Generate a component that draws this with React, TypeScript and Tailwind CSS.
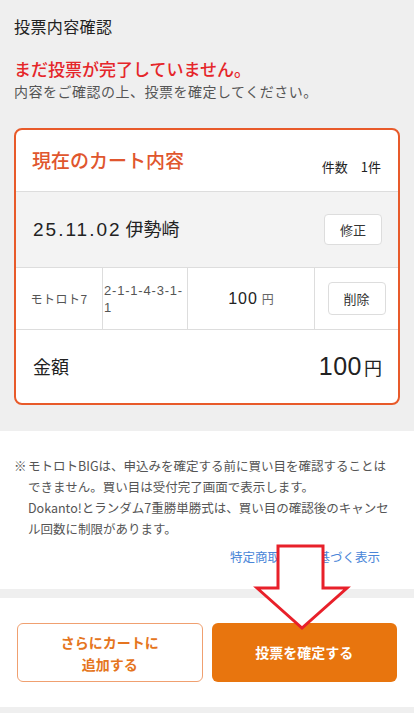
import React from "react";

const font = { fontFamily: '"Noto Sans CJK JP", "Noto Sans", sans-serif' };
const num = { fontFamily: '"Liberation Sans", Arial, sans-serif' };

export default function App() {
  return (
    <div className="relative min-h-[713px] w-[414px] bg-[#efefef] text-[#222]" style={font}>
      {/* Top */}
      <div className="px-[14px] pt-[14px]">
        <h1 className="text-[16px] leading-[24px] tracking-[0.4px] text-[#222]">投票内容確認</h1>
        <p className="mt-[20px] text-[17px] leading-[22px] font-medium text-[#e5262a]">まだ投票が完了していません。</p>
        <p className="text-[14px] leading-[22px] tracking-[0.5px] text-[#555]">内容をご確認の上、投票を確定してください。</p>
      </div>

      {/* Card */}
      <div className="mx-[14px] mt-[26px] overflow-hidden rounded-[8px] border-2 border-[#e85a2a] bg-white">
        <div className="flex h-[62px] items-center justify-between border-b border-[#dddddd] pl-[16px] pr-[17px]">
          <span className="text-[19px] font-medium text-[#e0562e]">現在のカート内容</span>
          <span className="mt-[12px] text-[13px] text-[#222]">件数　1件</span>
        </div>
        <div className="flex h-[75px] items-center justify-between bg-[#f3f3f3] pl-[17px] pr-[16px]">
          <span className="flex items-baseline text-[18px] text-[#222]">
            <span className="text-[19px] tracking-[2px]" style={num}>25.11.02</span>
            <span className="ml-[4px]">伊勢崎</span>
          </span>
          <button className="h-[31px] w-[58px] rounded-[4px] border border-[#dddddd] bg-white text-[13px] text-[#333]">修正</button>
        </div>
        <div className="grid h-[63px] grid-cols-[87px_85px_127px_1fr] border-y border-[#dddddd]">
          <div className="flex items-center justify-center border-r border-[#dddddd] text-[12px] tracking-[0.5px] text-[#555]">モトロト7</div>
          <div className="flex flex-col justify-center border-r border-[#dddddd] pl-[1px] text-[13px] leading-[17px] tracking-[0.8px] text-[#555]" style={num}>
            <div>2-1-1-4-3-1-</div>
            <div>1</div>
          </div>
          <div className="flex items-center justify-center border-r border-[#dddddd]">
            <span className="flex items-baseline">
              <span className="text-[16px] tracking-[1px] text-[#222]" style={num}>100</span>
              <span className="ml-[4px] text-[12px] text-[#666]">円</span>
            </span>
          </div>
          <div className="flex items-center justify-center">
            <button className="h-[33px] w-[58px] rounded-[4px] border border-[#dddddd] bg-white text-[13px] text-[#333]">削除</button>
          </div>
        </div>
        <div className="flex h-[73px] items-center justify-between pl-[17px] pr-[16px]">
          <span className="text-[18px] text-[#222]">金額</span>
          <span className="flex items-baseline">
            <span className="text-[25px] tracking-[0.5px] text-[#222]" style={num}>100</span>
            <span className="ml-[2px] text-[18px] text-[#222]">円</span>
          </span>
        </div>
      </div>

      {/* Notes */}
      <div className="mt-[26px] bg-white px-[14px] pb-[22px] pt-[24px]">
        <div className="flex text-[12.5px] leading-[21px] text-[#555]">
          <span className="w-[14px] shrink-0">※</span>
          <p className="w-[366px]">
            モトロトBIGは、申込みを確定する前に買い目を確認することはできません。買い目は受付完了画面で表示します。
            <br />
            Dokanto!とランダム7重勝単勝式は、買い目の確認後のキャンセル回数に制限があります。
          </p>
        </div>
        <div className="mt-[7px] flex justify-end pr-[20px]">
          <a className="text-[12.5px] leading-[21px] text-[#4a86d8]">特定商取引法に基づく表示</a>
        </div>
      </div>

      <div className="h-[9px]" />

      {/* Buttons */}
      <div className="grid grid-cols-2 gap-[9px] bg-white px-[17px] py-[25px]">
        <button className="flex h-[59px] items-center justify-center rounded-[6px] border border-[#f0a070] bg-white text-[14px] font-bold leading-[22px] text-[#e57520]">
          さらにカートに
          <br />
          追加する
        </button>
        <button className="flex h-[59px] items-center justify-center rounded-[6px] bg-[#e8750e] text-[14px] font-bold text-white">
          投票を確定する
        </button>
      </div>

      {/* Annotation arrow overlay */}
      <svg className="pointer-events-none absolute left-0 top-0" width="414" height="713" viewBox="0 0 414 713">
        <polygon
          points="278,546 323,546 323,588 347,588 302,628 257,588 278,588"
          fill="white"
          stroke="#e8202a"
          strokeWidth="3"
          strokeLinejoin="miter"
        />
      </svg>
    </div>
  );
}
